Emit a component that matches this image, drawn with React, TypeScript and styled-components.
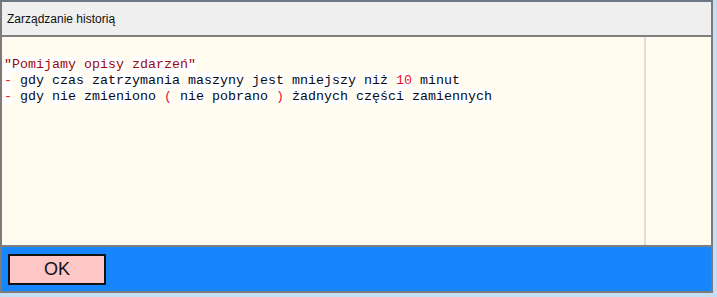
import React from "react";
import styled, { createGlobalStyle } from "styled-components";

const GlobalStyle = createGlobalStyle`
  html, body {
    margin: 0;
    padding: 0;
    background: #c4def6;
  }
`;

const Window = styled.div`
  width: 709px;
  height: 289px;
  border: 2px solid #7b7b7b;
  border-top-color: #6d7684;
  display: flex;
  flex-direction: column;
  background: #fffcef;
`;

const TitleBar = styled.div`
  height: 33px;
  flex-shrink: 0;
  background: #efefef;
  border-bottom: 2px solid #7f7f7f;
  display: flex;
  align-items: center;
  padding-left: 5px;
  font-family: "Liberation Sans", Arial, sans-serif;
  font-size: 12px;
  color: #111;
`;

const Body = styled.div`
  flex: 1;
  display: flex;
  background: #fffcef;
  border-bottom: 2px solid #7f7f7f;
`;

const TextPane = styled.div`
  width: 640px;
  padding: 20px 0 0 2px;
  font-family: "Liberation Mono", "Courier New", monospace;
  font-size: 13.33px;
  line-height: 16px;
  color: #0a0a14;
`;

const Divider = styled.div`
  width: 2px;
  background: #dedede;
`;

const SidePane = styled.div`
  flex: 1;
`;

const Line = styled.div`
  white-space: pre;
`;

const Token = styled.span<{ $tone?: "quote" | "red" }>`
  background: #ffffff;
  color: ${({ $tone }) =>
    $tone === "quote" ? "#9a0a0a" : $tone === "red" ? "#ee1111" : "inherit"};
`;

const Footer = styled.div`
  height: 44px;
  flex-shrink: 0;
  background: #1786fd;
  display: flex;
  align-items: flex-start;
  padding: 7px 0 0 6px;
  box-sizing: border-box;
`;

const OkButton = styled.button`
  width: 98px;
  height: 31px;
  border: 2px solid #111;
  background: #ffc6c6;
  font-family: "Liberation Sans", Arial, sans-serif;
  font-size: 18px;
  color: #111;
  padding: 0;
  cursor: pointer;
`;

type Piece = { text: string; tone?: "quote" | "red" };

const lines: Piece[][] = [
  [{ text: "\"Pomijamy", tone: "quote" }, { text: "opisy", tone: "quote" }, { text: "zdarzeń\"", tone: "quote" }],
  [
    { text: "-", tone: "red" },
    { text: "gdy" },
    { text: "czas" },
    { text: "zatrzymania" },
    { text: "maszyny" },
    { text: "jest" },
    { text: "mniejszy" },
    { text: "niż" },
    { text: "10", tone: "red" },
    { text: "minut" },
  ],
  [
    { text: "-", tone: "red" },
    { text: "gdy" },
    { text: "nie" },
    { text: "zmieniono" },
    { text: "(", tone: "red" },
    { text: "nie" },
    { text: "pobrano" },
    { text: ")", tone: "red" },
    { text: "żadnych" },
    { text: "części" },
    { text: "zamiennych" },
  ],
];

function App() {
  return (
    <>
      <GlobalStyle />
      <Window>
        <TitleBar>Zarządzanie historią</TitleBar>
        <Body>
          <TextPane>
            {lines.map((pieces, i) => (
              <Line key={`line-${i}`}>
                {pieces.map((p, j) => (
                  <React.Fragment key={`p-${i}-${j}`}>
                    {j > 0 && " "}
                    <Token $tone={p.tone}>{p.text}</Token>
                  </React.Fragment>
                ))}
              </Line>
            ))}
          </TextPane>
          <Divider />
          <SidePane />
        </Body>
        <Footer>
          <OkButton>OK</OkButton>
        </Footer>
      </Window>
    </>
  );
}

export default App;
